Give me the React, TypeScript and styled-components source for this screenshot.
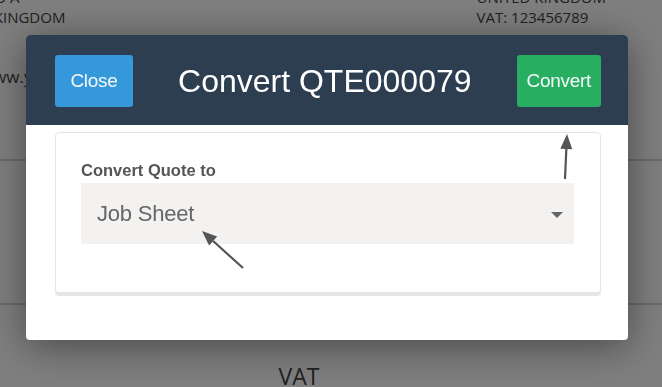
import styled, { createGlobalStyle } from "styled-components";

const GlobalStyle = createGlobalStyle`
    html, body {
        margin: 0;
        padding: 0;
        width: 662px;
        height: 387px;
        overflow: hidden;
        background: #ffffff;
    }
`;

// the quote page that sits under the dimmed overlay
const Page = styled.div`
    width: 662px;
    height: 387px;
    background: #ffffff;
    font-family: "Open Sans", "Liberation Sans", sans-serif;
    color: #444;
    display: flex;
    flex-direction: column;
    overflow: hidden;
`;

const AddressRow = styled.div`
    display: flex;
    justify-content: space-between;
    margin-top: -13px;
    padding-right: 56px;
`;

const Address = styled.div<{ $shift?: number }>`
    font-size: 15px;
    line-height: 20px;
    margin-left: ${(p) => p.$shift ?? 0}px;
`;

const Website = styled.div`
    font-size: 17px;
    margin-top: 38px;
    margin-left: -20px;
    white-space: nowrap;
`;

const Rule = styled.div<{ $gap: number }>`
    border-top: 2px solid #d6d6d6;
    margin-top: ${(p) => p.$gap}px;
`;

const TotalLabel = styled.div`
    font-size: 23px;
    text-align: center;
    margin-top: 55px;
    margin-right: 64px;
`;

const Overlay = styled.div`
    position: fixed;
    inset: 0;
    background: rgba(0, 0, 0, 0.5);
    padding: 35px 34px 0 26px;
`;

const Modal = styled.div`
    background: #ffffff;
    border-radius: 4px;
    overflow: hidden;
    box-shadow: 0 6px 40px rgba(0, 0, 0, 0.45);
    font-family: "Liberation Sans", Arial, sans-serif;
`;

const Header = styled.div`
    background: #2c3e50;
    display: flex;
    align-items: center;
    padding: 20px 27px 18px 29px;
`;

const Title = styled.h1`
    flex: 1;
    margin: 0;
    text-align: center;
    color: #ffffff;
    font-weight: 400;
    font-size: 32px;
    line-height: 40px;
`;

const Button = styled.button<{ $tone: "blue" | "green" }>`
    height: 52px;
    border: 0;
    border-radius: 3px;
    padding: 0 10px;
    min-width: 78px;
    color: #f4f8fb;
    font-family: "Liberation Sans", Arial, sans-serif;
    font-size: 19px;
    letter-spacing: -0.3px;
    background: ${(p) => (p.$tone === "blue" ? "#3498db" : "#27ae60")};
`;

const Body = styled.div`
    padding: 7px 27px 47px 29px;
`;

const Card = styled.div`
    border: 1px solid #e4e4e4;
    border-radius: 4px;
    box-shadow: 0 3px 0 #e6e6e6;
    padding: 27px 26px 48px 25px;
`;

const Label = styled.label`
    display: block;
    font-weight: 700;
    font-size: 16.5px;
    line-height: 20px;
    color: #555;
    margin-bottom: 3px;
`;

const Select = styled.div`
    height: 61px;
    background: #f3f2f1;
    display: flex;
    align-items: center;
    justify-content: space-between;
    padding: 0 11px 0 16px;
    font-size: 22px;
    color: #666;
    letter-spacing: -0.2px;
`;

const Caret = styled.span`
    width: 0;
    height: 0;
    border-left: 6px solid transparent;
    border-right: 6px solid transparent;
    border-top: 6px solid #666;
    margin-top: 2px;
`;

const Annotations = styled.svg`
    position: fixed;
    inset: 0;
    pointer-events: none;
`;

const Arrow = ({ x1, y1, x2, y2 }: { x1: number; y1: number; x2: number; y2: number }) => {
    const a = Math.atan2(y2 - y1, x2 - x1);
    const len = 15;
    const w = 6;
    const bx = x2 - len * Math.cos(a);
    const by = y2 - len * Math.sin(a);
    const px = -Math.sin(a) * w;
    const py = Math.cos(a) * w;
    return (
        <g>
            <line x1={x1} y1={y1} x2={bx} y2={by} stroke="#555" strokeWidth={2.2} />
            <polygon points={`${x2},${y2} ${bx + px},${by + py} ${bx - px},${by - py}`} fill="#555" />
        </g>
    );
};

const App = () => {
    return (
        <>
            <GlobalStyle />
            <Page>
                <AddressRow>
                    <Address $shift={-64}>
                        ENGLAND A<br />
                        UNITED KINGDOM
                    </Address>
                    <Address>
                        UNITED KINGDOM<br />
                        VAT: 123456789
                    </Address>
                </AddressRow>
                <Website>www.yourcompany.co.uk</Website>
                <Rule $gap={71} />
                <Rule $gap={142} />
                <TotalLabel>VAT</TotalLabel>
            </Page>
            <Overlay>
                <Modal>
                    <Header>
                        <Button $tone="blue">Close</Button>
                        <Title>Convert QTE000079</Title>
                        <Button $tone="green">Convert</Button>
                    </Header>
                    <Body>
                        <Card>
                            <Label>Convert Quote to</Label>
                            <Select>
                                <span>Job Sheet</span>
                                <Caret />
                            </Select>
                        </Card>
                    </Body>
                </Modal>
            </Overlay>
            <Annotations width="662" height="387">
                <Arrow x1={243} y1={268} x2={202} y2={231} />
                <Arrow x1={565} y1={179} x2={567} y2={134} />
            </Annotations>
        </>
    );
};

export default App;
